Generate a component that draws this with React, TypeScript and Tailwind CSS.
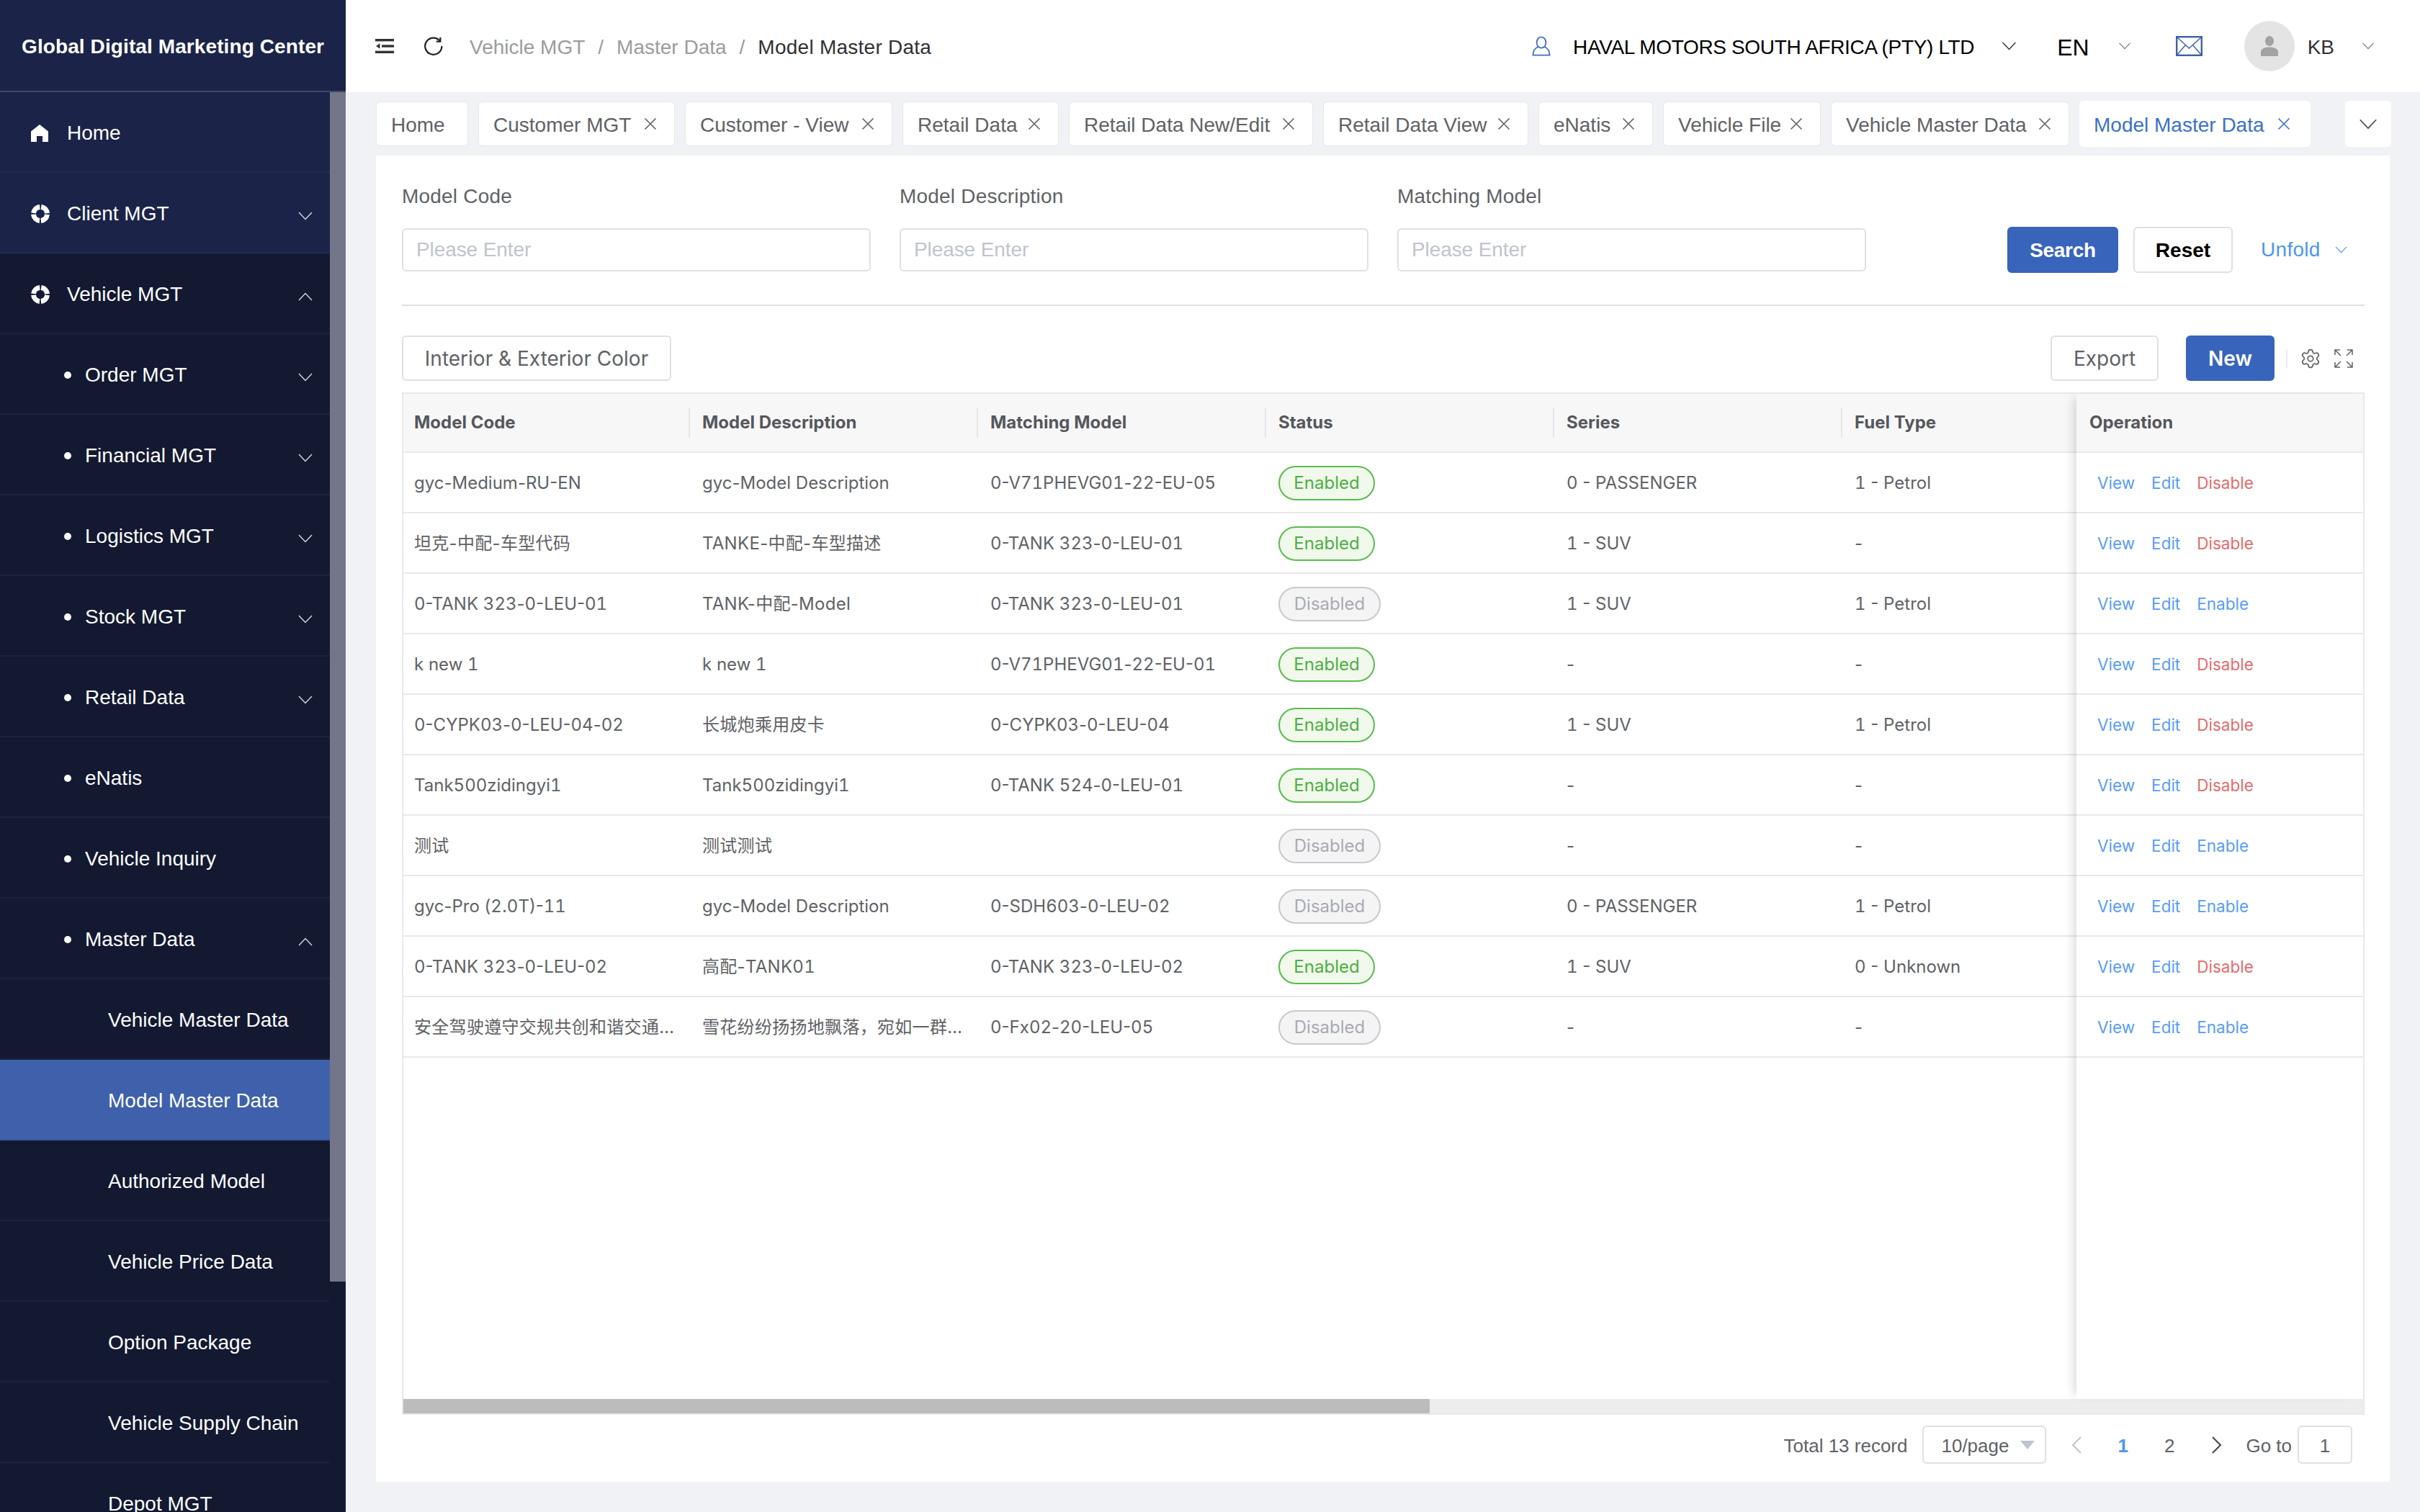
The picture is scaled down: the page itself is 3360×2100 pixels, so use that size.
import React from 'react';
import { Settings } from 'lucide-react';

const sans = "font-['Liberation_Sans',Arial,sans-serif]";

function Chevron({ up = false, className = '' }: { up?: boolean; className?: string }) {
  return (
    <svg viewBox="0 0 20 12" fill="none" stroke="currentColor" strokeWidth="1.4" className={className}>
      <polyline points={up ? '1,11 10,1.5 19,11' : '1,1 10,10.5 19,1'} />
    </svg>
  );
}

function CloseIcon() {
  return (
    <svg viewBox="0 0 18 18" fill="none" stroke="currentColor" strokeWidth="1.6" className="w-[18px] h-[18px] shrink-0">
      <path d="M1.5 1.5 16.5 16.5M16.5 1.5 1.5 16.5" />
    </svg>
  );
}

function HomeIcon() {
  return (
    <svg viewBox="0 0 24 24" fill="white" className="w-[24px] h-[24px] mr-[2px] shrink-0">
      <path d="M12 0 24 9.5V24H16V16H8V24H0V9.5Z" />
    </svg>
  );
}

function RingIcon() {
  return (
    <svg viewBox="0 0 26 26" fill="none" className="w-[26px] h-[26px] shrink-0">
      <circle cx="13" cy="13" r="9.5" stroke="white" strokeWidth="7" strokeDasharray="12.9 2" strokeDashoffset="-1" />
    </svg>
  );
}

type MenuItem = { label: string; level: 0 | 1 | 2; icon?: 'home' | 'ring'; arrow?: 'up' | 'down'; active?: boolean; light?: boolean };

const menu: MenuItem[] = [
  { label: 'Home', level: 0, icon: 'home', light: true },
  { label: 'Client MGT', level: 0, icon: 'ring', arrow: 'down', light: true },
  { label: 'Vehicle MGT', level: 0, icon: 'ring', arrow: 'up' },
  { label: 'Order MGT', level: 1, arrow: 'down' },
  { label: 'Financial MGT', level: 1, arrow: 'down' },
  { label: 'Logistics MGT', level: 1, arrow: 'down' },
  { label: 'Stock MGT', level: 1, arrow: 'down' },
  { label: 'Retail Data', level: 1, arrow: 'down' },
  { label: 'eNatis', level: 1 },
  { label: 'Vehicle Inquiry', level: 1 },
  { label: 'Master Data', level: 1, arrow: 'up' },
  { label: 'Vehicle Master Data', level: 2 },
  { label: 'Model Master Data', level: 2, active: true },
  { label: 'Authorized Model', level: 2 },
  { label: 'Vehicle Price Data', level: 2 },
  { label: 'Option Package', level: 2 },
  { label: 'Vehicle Supply Chain', level: 2 },
  { label: 'Depot MGT', level: 2 },
];

function MenuRow({ item }: { item: MenuItem }) {
  const bg = item.active ? 'bg-[#3f61ab] border-[#3a5a9f]' : item.light ? 'bg-[#1b2448] border-[#232c4f]' : 'bg-[#131931] border-[#1c2239]';
  return (
    <div className={`relative flex items-center h-[112px] pt-[3px] shrink-0 border-b-2 text-white text-[28px] ${bg}`}>
      {item.level === 0 && (
        <div className="flex items-center pl-[43px] gap-[24px]">
          {item.icon === 'home' ? <HomeIcon /> : <RingIcon />}
          <span>{item.label}</span>
        </div>
      )}
      {item.level === 1 && (
        <div className="flex items-center pl-[89px] gap-[19px]">
          <span className="w-[10px] h-[10px] rounded-full bg-white" />
          <span>{item.label}</span>
        </div>
      )}
      {item.level === 2 && <span className="pl-[150px]">{item.label}</span>}
      {item.arrow && <Chevron up={item.arrow === 'up'} className="absolute left-[414px] top-[54px] w-[20px] h-[12px] text-[#d5d7df]" />}
    </div>
  );
}

function Sidebar() {
  return (
    <aside className="w-[480px] h-[2100px] shrink-0 flex flex-col overflow-hidden bg-[#131931]">
      <div className="h-[128px] shrink-0 flex items-center pl-[30px] pt-[3px] bg-[#1b2448] border-b-2 border-[#414964] text-white text-[28px] font-bold tracking-[0.1px] whitespace-nowrap">
        Global Digital Marketing Center
      </div>
      <div className="flex flex-1 min-h-0">
        <nav className="w-[458px] flex flex-col">
          {menu.map((item) => (
            <MenuRow key={item.label} item={item} />
          ))}
        </nav>
        <div className="w-[22px] h-[1652px] bg-[#737689]" />
      </div>
    </aside>
  );
}

function Header() {
  return (
    <header className="h-[128px] shrink-0 bg-white flex items-center pl-[41px] text-[28px]">
      <svg viewBox="0 0 26 20" className="w-[26px] h-[20px] shrink-0" fill="#333">
        <rect width="26" height="3.4" />
        <rect y="16.6" width="26" height="3.4" />
        <rect x="9" y="8.3" width="17" height="3.4" />
        <path d="M1 10 6.5 6.3V13.7Z" />
      </svg>
      <svg viewBox="0 0 26 26" fill="none" stroke="#222" strokeWidth="2.2" className="w-[26px] h-[26px] ml-[42px] shrink-0">
        <path d="M21.6 5.6A11.6 11.6 0 1 0 24.4 13" />
        <path d="M22.4 1V6.6H16.8" />
      </svg>
      <div className="flex items-center ml-[37px] pt-[3px] whitespace-nowrap text-[#9a9ca1]">
        <span>Vehicle MGT</span>
        <span className="mx-[18px]">/</span>
        <span>Master Data</span>
        <span className="mx-[18px]">/</span>
        <span className="text-[#303133] tracking-[0.25px]">Model Master Data</span>
      </div>
      <div className="ml-auto flex items-center text-black whitespace-nowrap">
        <svg viewBox="0 0 28 28" fill="none" stroke="#3f6bc4" strokeWidth="1.8" className="w-[28px] h-[28px] shrink-0">
          <ellipse cx="14" cy="9" rx="6.4" ry="7.6" />
          <path d="M9.5 15C5 17 2.5 21 2.5 26.6H25.5C25.5 21 23 17 18.5 15" />
        </svg>
        <span className="ml-[30px] pt-[3px] tracking-[-0.35px]">HAVAL MOTORS SOUTH AFRICA (PTY) LTD</span>
        <Chevron className="w-[21px] h-[12px] ml-[38px] text-[#333]" />
        <span className="ml-[56px] pt-[3px] text-[32px]">EN</span>
        <Chevron className="w-[18px] h-[10px] ml-[40px] text-[#777]" />
        <svg viewBox="0 0 37 28" fill="none" stroke="#3f61ab" strokeWidth="2.4" className="w-[37px] h-[28px] ml-[62px] shrink-0">
          <rect x="1.2" y="1.2" width="34.6" height="25.6" />
          <path d="M1.2 1.2 18.5 17 35.8 1.2M1.2 26.8 13.5 12.5M35.8 26.8 23.5 12.5" strokeWidth="1.4" />
        </svg>
        <div className="w-[70px] h-[70px] ml-[58px] rounded-full bg-[#e4e4e4] flex items-center justify-center shrink-0">
          <svg viewBox="0 0 24 28" fill="#a3a3a3" className="w-[24px] h-[28px]">
            <ellipse cx="12" cy="7" rx="6" ry="7" />
            <path d="M0 28V22C0 18 5 15.5 12 15.5S24 18 24 22V28Z" />
          </svg>
        </div>
        <span className="ml-[18px] pt-[3px] text-[#303133]">KB</span>
        <Chevron className="w-[18px] h-[10px] ml-[38px] mr-[63px] text-[#777]" />
      </div>
    </header>
  );
}

const tabs = [
  { label: 'Home', width: 'w-[128px]' },
  { label: 'Customer MGT', width: 'w-[273px]', close: true },
  { label: 'Customer - View', width: 'w-[288px]', close: true },
  { label: 'Retail Data', width: 'w-[217px]', close: true },
  { label: 'Retail Data New/Edit', width: 'w-[339px]', close: true },
  { label: 'Retail Data View', width: 'w-[285px]', close: true },
  { label: 'eNatis', width: 'w-[159px]', close: true },
  { label: 'Vehicle File', width: 'w-[219px]', close: true },
  { label: 'Vehicle Master Data', width: 'w-[331px]', close: true },
];

function TabBar() {
  return (
    <div className="h-[88px] shrink-0 flex items-center pl-[42px] pr-[40px] text-[28px] whitespace-nowrap">
      <div className="flex items-center gap-[14px] text-[#606266]">
        {tabs.map((t) => (
          <div key={t.label} className={`h-[62px] flex items-center justify-between pl-[20px] pr-[24px] bg-white rounded-[6px] border border-[#e6e8ec] ${t.width}`}>
            <span className="pt-[3px]">{t.label}</span>
            {t.close && <CloseIcon />}
          </div>
        ))}
        <div className="h-[64px] w-[321px] flex items-center justify-between pl-[20px] pr-[28px] bg-white rounded-[6px] text-[#3c71c9]">
          <span className="pt-[3px]">Model Master Data</span>
          <CloseIcon />
        </div>
      </div>
      <div className="ml-auto w-[64px] h-[64px] flex items-center justify-center bg-white rounded-[6px] text-[#555]">
        <Chevron className="w-[26px] h-[15px]" />
      </div>
    </div>
  );
}

function Field({ label }: { label: string }) {
  return (
    <div className="w-[651px] shrink-0">
      <div className="h-[34px] leading-[34px] text-[28px] tracking-[0.2px] text-[#606266]">{label}</div>
      <input
        placeholder="Please Enter"
        readOnly
        className="mt-[27px] w-full h-[60px] px-[18px] text-[28px] tracking-[-0.1px] rounded-[6px] border-2 border-[#dfe0e6] outline-none placeholder:text-[#c0c4cc]"
      />
    </div>
  );
}

type Row = { code: string; desc: string; match: string; enabled: boolean; series: string; fuel: string };

const rows: Row[] = [
  { code: 'gyc-Medium-RU-EN', desc: 'gyc-Model Description', match: '0-V71PHEVG01-22-EU-05', enabled: true, series: '0 - PASSENGER', fuel: '1 - Petrol' },
  { code: '坦克-中配-车型代码', desc: 'TANKE-中配-车型描述', match: '0-TANK 323-0-LEU-01', enabled: true, series: '1 - SUV', fuel: '-' },
  { code: '0-TANK 323-0-LEU-01', desc: 'TANK-中配-Model', match: '0-TANK 323-0-LEU-01', enabled: false, series: '1 - SUV', fuel: '1 - Petrol' },
  { code: 'k new 1', desc: 'k new 1', match: '0-V71PHEVG01-22-EU-01', enabled: true, series: '-', fuel: '-' },
  { code: '0-CYPK03-0-LEU-04-02', desc: '长城炮乘用皮卡', match: '0-CYPK03-0-LEU-04', enabled: true, series: '1 - SUV', fuel: '1 - Petrol' },
  { code: 'Tank500zidingyi1', desc: 'Tank500zidingyi1', match: '0-TANK 524-0-LEU-01', enabled: true, series: '-', fuel: '-' },
  { code: '测试', desc: '测试测试', match: '', enabled: false, series: '-', fuel: '-' },
  { code: 'gyc-Pro (2.0T)-11', desc: 'gyc-Model Description', match: '0-SDH603-0-LEU-02', enabled: false, series: '0 - PASSENGER', fuel: '1 - Petrol' },
  { code: '0-TANK 323-0-LEU-02', desc: '高配-TANK01', match: '0-TANK 323-0-LEU-02', enabled: true, series: '1 - SUV', fuel: '0 - Unknown' },
  { code: '安全驾驶遵守交规共创和谐交通安全', desc: '雪花纷纷扬扬地飘落，宛如一群白色的蝴蝶', match: '0-Fx02-20-LEU-05', enabled: false, series: '-', fuel: '-' },
];

const columns = ['Model Code', 'Model Description', 'Matching Model', 'Status', 'Series', 'Fuel Type'];

// the reference's digits are wider than Inter's default ones, its hyphens are not
function Cell({ text }: { text: string }) {
  const cjk = /[\u4e00-\u9fff]/.test(text);
  return (
    <div className={`w-[400px] px-[15px] pt-[1px] truncate ${cjk ? 'tracking-[0.3px]' : ''}`}>
      {text.split(/(\d+)/).map((part, i) =>
        i % 2 === 1 ? (
          <span key={i} className="tabular-nums">
            {part}
          </span>
        ) : (
          part
        ),
      )}
    </div>
  );
}

function StatusTag({ enabled }: { enabled: boolean }) {
  return enabled ? (
    <span className="inline-flex items-center justify-center w-[134px] h-[48px] rounded-[24px] border-2 border-[#5bbb4f] bg-[#f0f9eb] text-[#4fae45] text-[24px]">Enabled</span>
  ) : (
    <span className="inline-flex items-center justify-center w-[142px] h-[48px] rounded-[24px] border-2 border-[#c8c9cc] bg-[#f4f4f5] text-[#a8abb2] text-[24px]">Disabled</span>
  );
}

function DataTable() {
  return (
    <div className="mt-[16px] h-[1420px] flex flex-col border-2 border-[#e9e9e9] font-['Inter','Noto_Sans_CJK_SC',sans-serif] text-[24px] text-[#606266]">
      <div className="flex flex-1 min-h-0">
        <div className="w-[2323px] overflow-hidden">
          <div className="flex h-[82px] w-[2400px] bg-[#f7f7f7] border-b-2 border-[#e9e9e9] font-bold text-[#55575c]">
            {columns.map((c, i) => (
              <div key={c} className="w-[400px] flex items-center">
                <span className={`flex items-center h-[42px] pl-[15px] w-[398px] ${i < 5 ? 'border-r-2 border-[#e6e6e6]' : ''}`}>{c}</span>
              </div>
            ))}
          </div>
          {rows.map((r) => (
            <div key={r.code} className="flex h-[84px] w-[2400px] border-b-2 border-[#e9e9e9] items-center">
              <Cell text={r.code} />
              <Cell text={r.desc} />
              <Cell text={r.match} />
              <div className="w-[400px] px-[15px] pt-[1px]">
                <StatusTag enabled={r.enabled} />
              </div>
              <Cell text={r.series} />
              <Cell text={r.fuel} />
            </div>
          ))}
        </div>
        <div className="relative z-10 flex-1 bg-white shadow-[-10px_0_12px_-6px_rgba(0,0,0,0.14)]">
          <div className="h-[82px] flex items-center pl-[18px] bg-[#f7f7f7] border-b-2 border-[#e9e9e9] font-bold text-[#55575c]">Operation</div>
          {rows.map((r) => (
            <div key={r.code} className="h-[84px] flex items-center pl-[29px] pt-[1px] gap-[23px] border-b-2 border-[#e9e9e9] text-[22.5px] text-[#5a9cf8]">
              <span>View</span>
              <span>Edit</span>
              <span className={r.enabled ? 'text-[#e46c6c]' : ''}>{r.enabled ? 'Disable' : 'Enable'}</span>
            </div>
          ))}
        </div>
      </div>
      <div className="h-[20px] shrink-0 bg-[#ededed]">
        <div className="w-[1425px] h-full bg-[#bcbcbc]" />
      </div>
    </div>
  );
}

function Pagination() {
  return (
    <div className="mt-[15px] h-[53px] flex items-center justify-end pr-[17px] text-[26px] text-[#606266] whitespace-nowrap">
      <span className="pt-[3px]">Total 13 record</span>
      <div className="ml-[21px] w-[172px] h-[53px] flex items-center justify-between pl-[24px] pr-[14px] rounded-[6px] border-2 border-[#dfe0e6]">
        <span className="pt-[3px]">10/page</span>
        <span className="w-0 h-0 border-x-[10px] border-x-transparent border-t-[12px] border-t-[#c0c4cc]" />
      </div>
      <svg viewBox="0 0 14 24" fill="none" stroke="#c0c4cc" strokeWidth="2" className="w-[14px] h-[24px] ml-[35px]">
        <polyline points="13,1 2,12 13,23" />
      </svg>
      <span className="ml-[50px] pt-[3px] font-bold text-[#4f95f4]">1</span>
      <span className="ml-[50px] pt-[3px]">2</span>
      <svg viewBox="0 0 14 24" fill="none" stroke="#444" strokeWidth="2" className="w-[14px] h-[24px] ml-[52px]">
        <polyline points="1,1 12,12 1,23" />
      </svg>
      <span className="ml-[33px] pt-[3px]">Go to</span>
      <div className="ml-[8px] w-[76px] h-[53px] pt-[3px] flex items-center justify-center rounded-[6px] border-2 border-[#dfe0e6]">1</div>
    </div>
  );
}

function Card() {
  return (
    <main className="ml-[42px] w-[2796px] h-[1842px] bg-white pt-[40px] pl-[36px] pr-[35px]">
      <div className="flex items-end">
        <div className="flex gap-[40px]">
          <Field label="Model Code" />
          <Field label="Model Description" />
          <Field label="Matching Model" />
        </div>
        <div className="flex items-center h-[64px] -mb-[2px] ml-[196px] text-[28px]">
          <button className="w-[154px] h-[64px] pt-[2px] rounded-[6px] bg-[#3864bc] text-white font-bold tracking-[-0.3px]">Search</button>
          <button className="ml-[21px] w-[138px] h-[64px] pt-[2px] rounded-[6px] border-2 border-[#dfe0e6] text-black font-bold">Reset</button>
          <span className="ml-[39px] text-[#4f95f4] tracking-[0.3px]">Unfold</span>
          <Chevron className="w-[17px] h-[10px] ml-[20px] text-[#4f95f4]" />
        </div>
      </div>
      <div className="mt-[46px] h-[2px] bg-[#dfe0e6]" />
      <div className="mt-[41px] h-[63px] flex items-center text-[28px] text-[#606266] font-['Inter',sans-serif]">
        <button className="w-[374px] h-[63px] rounded-[6px] border-2 border-[#dfe0e6]">Interior &amp; Exterior Color</button>
        <button className="ml-auto w-[150px] h-[63px] rounded-[6px] border-2 border-[#dfe0e6]">Export</button>
        <button className="ml-[38px] w-[123px] h-[63px] rounded-[6px] bg-[#3864bc] text-white font-semibold">New</button>
        <span className="ml-[16px] w-[2px] h-[26px] bg-[#ebebeb]" />
        <Settings strokeWidth={1.4} className="ml-[17px] w-[30px] h-[30px] text-[#606266]" />
        <svg viewBox="0 0 26 26" fill="none" stroke="#606266" strokeWidth="1.5" className="ml-[18px] mr-[16px] w-[26px] h-[26px]">
          <path d="M1 8V1H8M1 1 9 9M25 8V1H18M25 1 17 9M1 18V25H8M1 25 9 17M25 18V25H18M25 25 17 17" />
        </svg>
      </div>
      <DataTable />
      <Pagination />
    </main>
  );
}

export default function App() {
  return (
    <div className={`flex w-[3360px] h-[2100px] overflow-hidden bg-[#f0f2f5] ${sans}`}>
      <Sidebar />
      <div className="flex-1 flex flex-col min-w-0">
        <Header />
        <TabBar />
        <Card />
      </div>
    </div>
  );
}
